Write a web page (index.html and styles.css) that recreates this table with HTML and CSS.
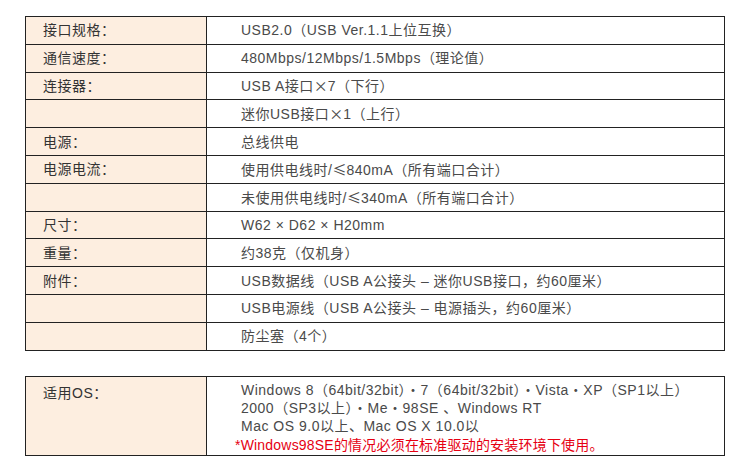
FILE: index.html
```html
<!DOCTYPE html>
<html lang="zh-CN">
<head>
<meta charset="utf-8">
<link rel="stylesheet" href="styles.css">
</head>
<body>
<div class="page">
  <table class="spec">
    <tr><th>接口规格：</th><td>USB2.0（USB Ver.1.1上位互换）</td></tr>
    <tr><th>通信速度：</th><td>480Mbps/12Mbps/1.5Mbps（理论值）</td></tr>
    <tr><th>连接器：</th><td>USB A接口<span class="cjk">×</span>7（下行）</td></tr>
    <tr><th></th><td>迷你USB接口<span class="cjk">×</span>1（上行）</td></tr>
    <tr><th>电源：</th><td>总线供电</td></tr>
    <tr><th>电源电流：</th><td>使用供电线时/<span class="cjk">≤</span>840mA（所有端口合计）</td></tr>
    <tr><th></th><td>未使用供电线时/<span class="cjk">≤</span>340mA（所有端口合计）</td></tr>
    <tr><th>尺寸：</th><td>W62 × D62 × H20mm</td></tr>
    <tr><th>重量：</th><td>约38克（仅机身）</td></tr>
    <tr><th>附件：</th><td>USB数据线（USB A公接头 – 迷你USB接口，约60厘米）</td></tr>
    <tr><th></th><td>USB电源线（USB A公接头 – 电源插头，约60厘米）</td></tr>
    <tr><th></th><td>防尘塞（4个）</td></tr>
  </table>
  <table class="spec os">
    <tr>
      <th>适用OS：</th>
      <td>
        <div class="line">Windows 8（64bit/32bit）・7（64bit/32bit）・Vista・XP（SP1以上）</div>
        <div class="line">2000（SP3以上）・Me・98SE 、Windows RT</div>
        <div class="line">Mac OS 9.0以上、Mac OS X 10.0以</div>
        <div class="note">*Windows98SE的情况必须在标准驱动的安装环境下使用。</div>
      </td>
    </tr>
  </table>
</div>
</body>
</html>
```

FILE: styles.css
```css
html, body {
  margin: 0;
  padding: 0;
  background: #fff;
}
.page {
  padding: 16px 0 0 25px;
  width: 700px;
  display: flex;
  flex-direction: column;
  gap: 25px;
  font-family: "Liberation Sans", "Noto Sans CJK SC", sans-serif;
  font-size: 14px;
  letter-spacing: 0.5px;
}
.spec {
  width: 700px;
  border-collapse: collapse;
  table-layout: fixed;
}
.spec th, .spec td {
  border: 1px solid #222;
  height: 26.8px;
  padding: 0;
  vertical-align: middle;
  text-align: left;
  font-weight: normal;
  line-height: 18px;
}
.spec th {
  width: 163px;
  background: #fdeee0;
  color: #333;
  padding-left: 17px;
}
.spec td {
  color: #4a4a4a;
  padding-left: 34px;
}
.cjk {
  font-family: "Noto Sans CJK SC", sans-serif;
  letter-spacing: 0;
}
.os th {
  vertical-align: top;
  padding-top: 7px;
}
.os td {
  height: auto;
  padding-top: 4px;
  padding-bottom: 0;
}
.os .note {
  color: #e60012;
  margin-left: -6px;
  line-height: 20px;
  letter-spacing: 0.2px;
}
```
